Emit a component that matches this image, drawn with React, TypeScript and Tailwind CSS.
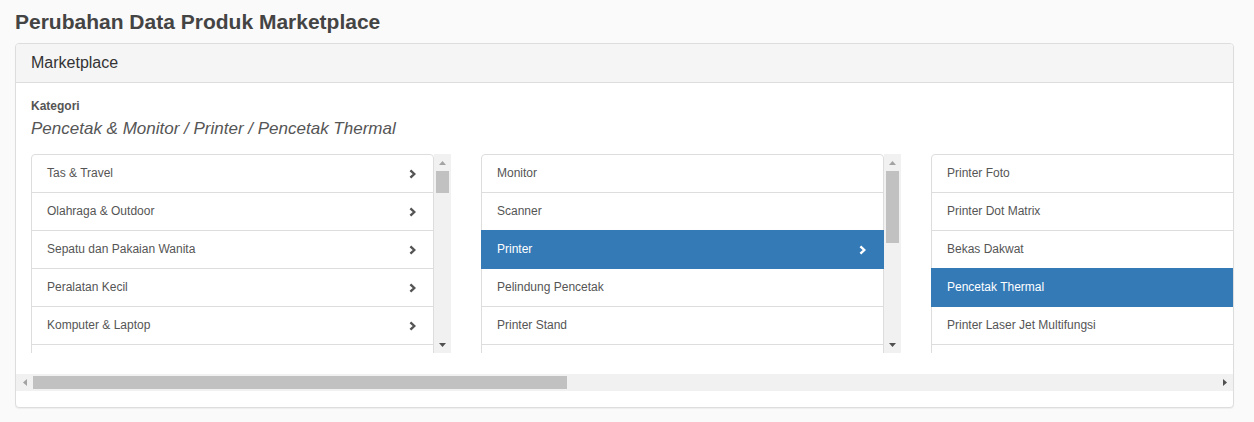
import React from "react";

type Item = { label: string; chevron?: boolean; active?: boolean };

const col1: Item[] = [
  { label: "Tas & Travel", chevron: true },
  { label: "Olahraga & Outdoor", chevron: true },
  { label: "Sepatu dan Pakaian Wanita", chevron: true },
  { label: "Peralatan Kecil", chevron: true },
  { label: "Komputer & Laptop", chevron: true },
  { label: "" },
];

const col2: Item[] = [
  { label: "Monitor" },
  { label: "Scanner" },
  { label: "Printer", chevron: true, active: true },
  { label: "Pelindung Pencetak" },
  { label: "Printer Stand" },
  { label: "" },
];

const col3: Item[] = [
  { label: "Printer Foto" },
  { label: "Printer Dot Matrix" },
  { label: "Bekas Dakwat" },
  { label: "Pencetak Thermal", active: true },
  { label: "Printer Laser Jet Multifungsi" },
  { label: "" },
];

function Chevron({ white }: { white?: boolean }) {
  return (
    <svg width="7" height="10" viewBox="0 0 7 10" className="shrink-0">
      <polyline
        points="1.4,1.3 5.3,5 1.4,8.7"
        fill="none"
        stroke={white ? "#ffffff" : "#555555"}
        strokeWidth="2.4"
        strokeLinejoin="miter"
      />
    </svg>
  );
}

function Tri({ dir, dark }: { dir: "up" | "down" | "left" | "right"; dark?: boolean }) {
  const fill = dark ? "#505050" : "#a3a3a3";
  if (dir === "up")
    return (
      <svg width="7" height="4" viewBox="0 0 7 4">
        <polygon points="0,4 3.5,0 7,4" fill={fill} />
      </svg>
    );
  if (dir === "down")
    return (
      <svg width="7" height="4" viewBox="0 0 7 4">
        <polygon points="0,0 3.5,4 7,0" fill={fill} />
      </svg>
    );
  if (dir === "left")
    return (
      <svg width="4" height="7" viewBox="0 0 4 7">
        <polygon points="4,0 0,3.5 4,7" fill={fill} />
      </svg>
    );
  return (
    <svg width="4" height="7" viewBox="0 0 4 7">
      <polygon points="0,0 4,3.5 0,7" fill={fill} />
    </svg>
  );
}

function VScroll({ thumb }: { thumb: "small" | "large" }) {
  return (
    <div className="flex h-[199px] w-[17px] shrink-0 flex-col bg-[#f1f1f1]">
      <div className="flex h-[17px] items-center justify-center">
        <Tri dir="up" />
      </div>
      <div
        className={`mx-[2px] bg-[#c1c1c1] ${thumb === "small" ? "h-[22px]" : "h-[72px]"}`}
      />
      <div className="flex-1" />
      <div className="flex h-[17px] items-center justify-center">
        <Tri dir="down" dark />
      </div>
    </div>
  );
}

function ListColumn({ items, thumb }: { items: Item[]; thumb: "small" | "large" }) {
  return (
    <div className="flex w-[420px] shrink-0">
      <div className="h-[199px] w-[403px] shrink-0 overflow-hidden">
        {items.map((it, i) => (
          <div
            key={i}
            className={`relative -mb-px flex h-[39px] items-center justify-between border pl-[15px] pr-[17px] text-[12px] leading-[17px] ${
              i === 0 ? "rounded-t-[4px]" : ""
            } ${
              it.active
                ? "z-10 border-[#337ab7] bg-[#337ab7] text-white"
                : "border-[#dddddd] bg-white text-[#555555]"
            }`}
          >
            <span className="whitespace-nowrap">{it.label}</span>
            {it.chevron && <Chevron white={it.active} />}
          </div>
        ))}
      </div>
      <VScroll thumb={thumb} />
    </div>
  );
}

export default function App() {
  return (
    <div className="min-h-[422px] bg-[#fafafa] px-[15px] pt-[10px] font-['Liberation_Sans',Arial,sans-serif]">
      <h1 className="text-[21px] font-bold leading-[24px] text-[#444444]">
        Perubahan Data Produk Marketplace
      </h1>
      <div className="mt-[9px] w-[1219px] overflow-hidden rounded-[4px] border border-[#dddddd] bg-white shadow-[0_1px_1px_rgba(0,0,0,0.05)]">
        <div className="h-[39px] border-b border-[#dddddd] bg-[#f5f5f5] px-[15px] pt-[8px] text-[16px] leading-[22px] text-[#333333]">
          Marketplace
        </div>
        <div className="pb-[16px] pt-[15px]">
          <div className="px-[15px]">
            <div className="text-[12px] font-bold leading-[17px] text-[#555555]">Kategori</div>
            <div className="mt-[2px] text-[17px] italic leading-[24px] text-[#555555]">
              Pencetak &amp; Monitor / Printer / Pencetak Thermal
            </div>
          </div>
          <div className="mt-[13px] overflow-hidden">
            <div className="flex gap-[30px] pb-[21px] pl-[15px]">
              <ListColumn items={col1} thumb="small" />
              <ListColumn items={col2} thumb="large" />
              <ListColumn items={col3} thumb="small" />
            </div>
            <div className="flex h-[17px] bg-[#f1f1f1]">
              <div className="flex w-[17px] items-center justify-center">
                <Tri dir="left" />
              </div>
              <div className="my-[2px] w-[534px] bg-[#c1c1c1]" />
              <div className="flex-1" />
              <div className="flex w-[17px] items-center justify-center">
                <Tri dir="right" dark />
              </div>
            </div>
          </div>
        </div>
      </div>
    </div>
  );
}
